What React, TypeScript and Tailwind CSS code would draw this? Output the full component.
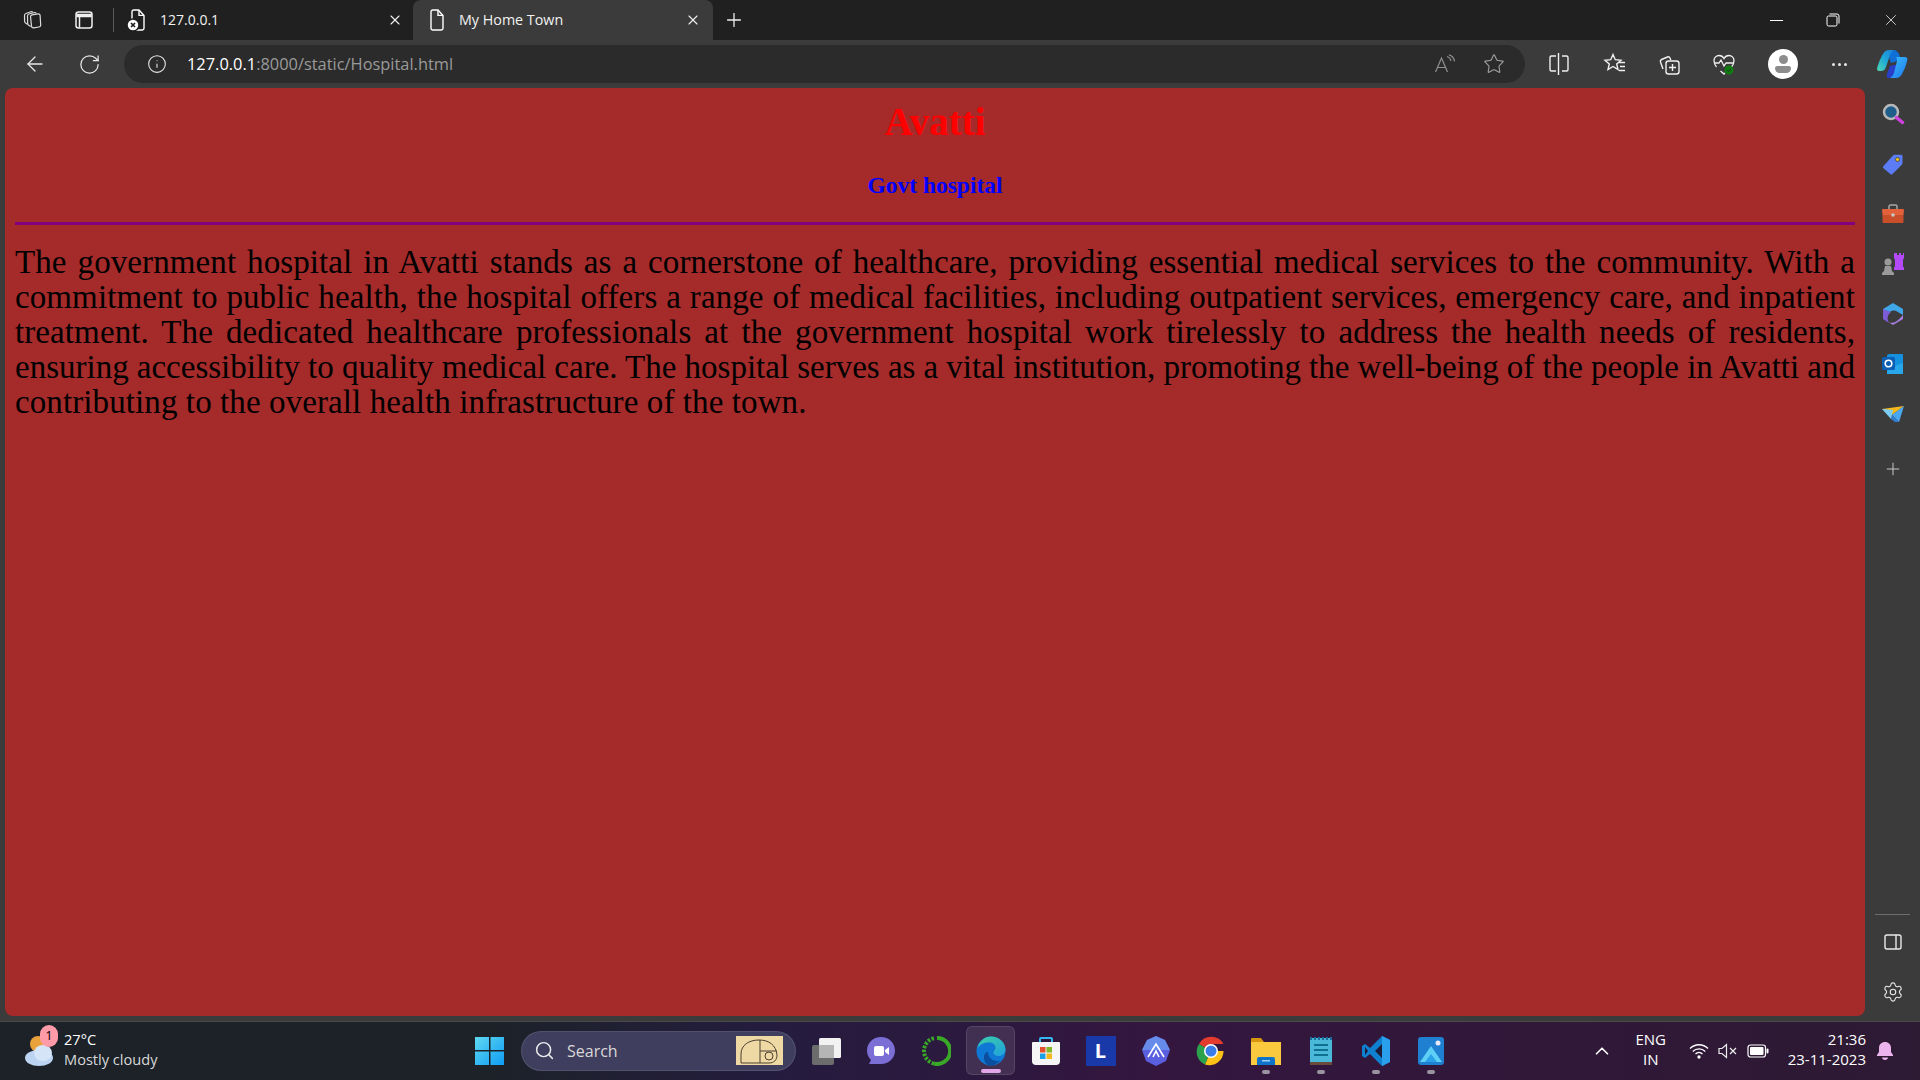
import { ArrowLeft, ChevronUp, Info, Plus, RotateCw, Search, Settings, Star, X } from "lucide-react";
import type { ReactNode } from "react";

const ui = "font-['Open_Sans','Noto_Sans',sans-serif]";

const DocIcon = ({ badge }: { badge?: boolean }) => (
  <svg width="22" height="24" viewBox="0 0 22 24" fill="none" stroke="#fff" strokeWidth="1.400">
    <path d="M6 3.700A1.700 1.700 0 0 1 7.700 2H13l5 5.400v12.900a1.700 1.700 0 0 1-1.700 1.700H7.700A1.700 1.700 0 0 1 6 20.300z" />
    <path d="M13 2v5.400h5" />
    {badge && (
      <>
        <circle cx="7" cy="17" r="6" fill="#fff" stroke="#202020" strokeWidth="1.500" />
        <path d="M5 15l4 4M9 15l-4 4" stroke="#202020" strokeWidth="1.700" />
      </>
    )}
  </svg>
);

const TitleBar = () => (
  <div className="h-10 bg-[#202020] flex items-center shrink-0 relative">
    <div className="w-[22px] ml-[21px] flex justify-center">
      <svg width="22" height="22" viewBox="0 0 22 22" fill="none" stroke="#dcdcdc" strokeWidth="1.200">
        <path d="M9.500 7.500a2 2 0 0 1 1.600-1.700l6-1a1.800 1.800 0 0 1 2 1.700l.6 9.500a2 2 0 0 1-1.700 2l-5.300.8a2 2 0 0 1-2.200-1.700z" />
        <path d="M9.700 17.500l-2-1.300a2 2 0 0 1-1-1.700L6.500 7a2 2 0 0 1 1.500-2l5.500-1.500a2 2 0 0 1 1.800.8" />
        <path d="M6.800 15.500l-2.200-1.500a2 2 0 0 1-1-1.700l-.1-5.800a2 2 0 0 1 1.400-2l5-1.700a2 2 0 0 1 2 .5" />
      </svg>
    </div>
    <div className="ml-[31px] w-5 flex justify-center">
      <svg width="20" height="20" viewBox="0 0 20 20" fill="none" stroke="#f0f0f0" strokeWidth="1.500">
        <rect x="2" y="2" width="16" height="16" rx="2.500" />
        <path d="M2.300 5.500h15.400" strokeWidth="3.500" />
        <path d="M5.500 6.500v11" />
      </svg>
    </div>
    <div className="ml-[19px] w-px h-6 bg-[#5a5a5a]" />
    <div className="flex items-center w-[299px] h-10 pl-[12px] pr-[10px]">
      <DocIcon badge />
      <span className={`${ui} ml-[12px] text-[14px] text-[#f2f2f2] flex-1 -translate-y-px`}>127.0.0.1</span>
      <X size={16} color="#f0f0f0" strokeWidth={1.700} />
    </div>
    <div className="flex items-center w-[300px] h-10 bg-[#3b3b3b] rounded-t-lg pl-[12px] pr-[12px]">
      <DocIcon />
      <span className={`${ui} ml-[12px] text-[14.300px] text-[#f2f2f2] flex-1`}>My Home Town</span>
      <X size={16} color="#f0f0f0" strokeWidth={1.700} />
    </div>
    <Plus size={22} color="#f0f0f0" strokeWidth={1.400} className="ml-[10px]" />
    <div className="ml-auto flex items-center">
      <div className="w-[56px] flex justify-center">
        <div className="w-[13px] h-px bg-white" />
      </div>
      <div className="w-[58px] flex justify-center">
        <svg width="14" height="14" viewBox="0 0 14 14" fill="none" stroke="#fff" strokeWidth="1">
          <rect x="1" y="3" width="10" height="10" rx="1.500" />
          <path d="M3.500 1h7.500a2 2 0 0 1 2 2v7.500" />
        </svg>
      </div>
      <div className="w-[58px] flex justify-center">
        <X size={18} color="#fff" strokeWidth={1} />
      </div>
    </div>
  </div>
);

const ToolIcon = ({ w, children }: { w: number; children: ReactNode }) => (
  <div className="flex justify-center items-center" style={{ width: w }}>
    {children}
  </div>
);

const CopilotLogo = () => (
  <svg width="32" height="30" viewBox="0 0 32 30">
    <defs>
      <linearGradient id="cpa" x1="0" y1="1" x2="1" y2="0">
        <stop offset="0" stopColor="#4fd8b0" />
        <stop offset="0.500" stopColor="#1fa8d8" />
        <stop offset="1" stopColor="#1a7fd8" />
      </linearGradient>
      <linearGradient id="cpb" x1="0" y1="0" x2="1" y2="1">
        <stop offset="0" stopColor="#38c0f8" />
        <stop offset="1" stopColor="#1f78f0" />
      </linearGradient>
    </defs>
    <path d="M17 1c3 0 5 2 6 4l2 6-10 3-2-6c-1-3 1-7 4-7z" fill="#0f6fd6" />
    <path d="M13 29c-2 0-3-2-2-4l3-8 8-2 0 4c-1 5-4 10-9 10z" fill="#2a3fc8" />
    <path d="M1 20C2 15 5 8 7 5c1-2 3-4 6-4h5c-2 1-3 3-4 5l-4 12c-1 3-3 4-5 4H3c-1 0-2-1-2-2z" fill="url(#cpa)" />
    <path d="M20 8h9c2 0 3 2 2 4-1 5-3 9-5 13-1 2-3 4-6 4h-6c2-1 3-3 4-5l3-12c0-2 0-3-1-4z" fill="url(#cpb)" />
  </svg>
);

const Toolbar = () => (
  <div className="h-12 bg-[#3b3b3b] flex items-center shrink-0 pl-[23px]">
    <ToolIcon w={24}>
      <ArrowLeft size={24} color="#e8e8e8" strokeWidth={1.300} />
    </ToolIcon>
    <div className="ml-[31px]">
      <RotateCw size={23} color="#e8e8e8" strokeWidth={1.300} />
    </div>
    <div className="ml-[23px] w-[1401px] h-[38px] bg-[#2b2b2b] rounded-full flex items-center">
      <Info size={20} color="#e8e8e8" strokeWidth={1.300} className="ml-[23px]" />
      <span className={`${ui} ml-5 text-[16.400px]`}>
        <span className="text-white">127.0.0.1</span>
        <span className="text-[#9a9a9a]">:8000/static/Hospital.html</span>
      </span>
      <div className="ml-auto mr-[20px] flex items-center gap-[27px]">
        <svg width="22" height="20" viewBox="0 0 22 20" fill="none" stroke="#8f8f8f" strokeWidth="1.200">
          <path d="M1.500 18L7.500 4l6 14M3.500 13.500h8" />
          <path d="M13 2.500c2 .5 3.500 2 4 4.500M15 0.800c2.800.8 5 3 5.500 6.500" />
        </svg>
        <Star size={22} color="#a0a0a0" strokeWidth={1.200} />
      </div>
    </div>
    <div className="flex items-center ml-[20px]">
      <ToolIcon w={28}>
        <svg width="22" height="24" viewBox="0 0 22 24" fill="none" stroke="#f0f0f0" strokeWidth="1.400">
          <path d="M8 4H3.500A1.500 1.500 0 0 0 2 5.500v12A1.500 1.500 0 0 0 3.500 19H8M14 4h4.500A1.500 1.500 0 0 1 20 5.500v12a1.500 1.500 0 0 1-1.500 1.500H14" />
          <path d="M10.500 1v22" />
        </svg>
      </ToolIcon>
      <div className="ml-[28px]">
        <ToolIcon w={28}>
          <svg width="24" height="24" viewBox="0 0 24 24" fill="none" stroke="#f0f0f0" strokeWidth="1.400">
            <path d="M10 2.500l2.300 5.200 5.700.5-4.300 3.700 1.300 5.600-5-3-5 3 1.300-5.600L2 8.200l5.700-.5z" />
            <path d="M16 10.500h6M17 14.500h5M16 18.500h6" />
          </svg>
        </ToolIcon>
      </div>
      <div className="ml-[26px]">
        <ToolIcon w={28}>
          <svg width="24" height="24" viewBox="0 0 24 24" fill="none" stroke="#f0f0f0" strokeWidth="1.400">
            <path d="M6 17l-2.500-7a2 2 0 0 1 1-2.500l6-2.500a2 2 0 0 1 2.500 1l.8 2" />
            <rect x="9" y="9" width="13" height="13" rx="2.500" />
            <path d="M15.500 12v7M12 15.500h7" />
          </svg>
        </ToolIcon>
      </div>
      <div className="ml-[27px]">
        <ToolIcon w={28}>
          <svg width="24" height="24" viewBox="0 0 24 24" fill="none">
            <path d="M4.500 15C2.500 12.500 2 10.500 2 8.500 2 5.500 4.500 3.500 7 3.500c2 0 4 1 5 3 1-2 3-3 5-3 2.500 0 5 2 5 5 0 2-.5 4-2.500 6.500M8.500 19l3.500 3 1-1" stroke="#f0f0f0" strokeWidth="1.300" />
            <path d="M2 11h5l2-3 3 6 2-3h8" stroke="#f0f0f0" strokeWidth="1.300" />
            <circle cx="17" cy="18" r="4.500" fill="#107c10" />
            <path d="M15 18l1.500 1.500 2.500-2.500" stroke="#2b2b2b" strokeWidth="1" />
          </svg>
        </ToolIcon>
      </div>
      <div className="ml-[30px] w-[30px] h-[30px] rounded-full bg-white flex flex-col items-center justify-center gap-[2px]">
        <div className="w-[9px] h-[9px] rounded-full bg-[#8c8c8c]" />
        <div className="w-[16px] h-[7px] rounded-b-lg rounded-t-sm bg-[#8c8c8c]" />
      </div>
      <div className="ml-[34px] flex gap-[3px]">
        <div className="w-[3px] h-[3px] rounded-full bg-[#e8e8e8]" />
        <div className="w-[3px] h-[3px] rounded-full bg-[#e8e8e8]" />
        <div className="w-[3px] h-[3px] rounded-full bg-[#e8e8e8]" />
      </div>
      <div className="ml-[29px]">
        <CopilotLogo />
      </div>
    </div>
  </div>
);

const Page = () => (
  <main className="flex-1 bg-[#a52a2a] rounded-lg ml-[5px] mb-[5px] px-[10px] pt-[14px] font-['Liberation_Serif',serif]">
    <h1 className="text-center text-[39px] leading-[40px] font-bold text-[#ff0000]">Avatti</h1>
    <h2 className="text-center text-[23.500px] leading-[28px] font-bold text-[#0000ff] mt-[29px]">Govt hospital</h2>
    <hr className="mt-[23px] h-[3px] border-0 bg-[#800080]" />
    <p className="mt-[20px] text-justify text-[33px] leading-[35px] tracking-[0.1px] text-black">
      The government hospital in Avatti stands as a cornerstone of healthcare, providing essential medical services to
      the community. With a commitment to public health, the hospital offers a range of medical facilities, including
      outpatient services, emergency care, and inpatient treatment. The dedicated healthcare professionals at the
      government hospital work tirelessly to address the health needs of residents,{" "}
      <span className="tracking-normal [word-spacing:-2px]">
        ensuring accessibility to quality medical care. The hospital serves as a vital institution, promoting the
        well-being of the people in Avatti and
      </span>{" "}
      contributing to the overall health infrastructure of the town.
    </p>
  </main>
);

const SideSlot = ({ children }: { children: ReactNode }) => (
  <div className="h-[50px] flex items-center justify-center">{children}</div>
);

const Sidebar = () => (
  <aside className="w-[55px] flex flex-col items-center pb-[18px] pt-px">
    <SideSlot>
      <svg width="24" height="24" viewBox="0 0 24 24" fill="none">
        <circle cx="10" cy="10" r="7" fill="#1f5d8a" stroke="#b8b8b8" strokeWidth="2.500" />
        <path d="M15.500 15.500l6 5" stroke="#d040e0" strokeWidth="3.500" strokeLinecap="round" />
      </svg>
    </SideSlot>
    <SideSlot>
      <svg width="22" height="22" viewBox="0 0 22 22">
        <path d="M1.500 13L11 2.500c.5-.5 1-.7 1.500-.7H19c1 0 1.500.7 1.500 1.500v7c0 .5-.2 1-.6 1.400L10.500 21c-.7.7-1.500.7-2.200 0L1.500 15.200c-.7-.7-.7-1.500 0-2.200z" fill="#5b7cf5" />
        <circle cx="15.500" cy="6.500" r="2" fill="#f5c518" stroke="#333" strokeWidth="0.700" />
      </svg>
    </SideSlot>
    <SideSlot>
      <svg width="24" height="22" viewBox="0 0 24 22">
        <path d="M8 6V3.500C8 2.700 8.700 2 9.500 2h5c.8 0 1.500.7 1.500 1.500V6" fill="none" stroke="#a8a8a8" strokeWidth="1.500" />
        <path d="M1 7a1 1 0 0 1 1-1h20a1 1 0 0 1 1 1l-.5 5h-21z" fill="#e2603a" />
        <path d="M1.500 12h21v7a1 1 0 0 1-1 1h-19a1 1 0 0 1-1-1z" fill="#c94f2b" />
        <circle cx="12" cy="12" r="1.800" fill="#c8c8c8" />
      </svg>
    </SideSlot>
    <SideSlot>
      <svg width="24" height="24" viewBox="0 0 24 24">
        <path d="M14 1h2v2h2V1h2v2h2V1h1v5l-1 2v7h1v3H13v-3h1V8l-1-2V1z" fill="#b44af5" />
        <circle cx="7" cy="10" r="3.500" fill="#9a9a9a" />
        <path d="M4 14h6l1 5 2 2v2H1v-2l2-2z" fill="#9a9a9a" />
      </svg>
    </SideSlot>
    <SideSlot>
      <svg width="22" height="24" viewBox="0 0 22 24">
        <path d="M11 1l10 6v6L15 9.500C13 8 9.500 8.500 8 10L1 15V7z" fill="#3fa6e8" />
        <path d="M1 7v10l6 4c-1-2-2-5-1-7 .5-2 2-3 3-4z" fill="#7b5cd6" />
        <path d="M21 13v4l-10 6-4-2.500c2 .5 5 .5 7-1 2-1 4-3.500 7-6.500z" fill="#a87de0" />
      </svg>
    </SideSlot>
    <SideSlot>
      <svg width="22" height="22" viewBox="0 0 22 22">
        <path d="M7 1h13a1 1 0 0 1 1 1v18a1 1 0 0 1-1 1H5V3a2 2 0 0 1 2-2z" fill="#1490df" />
        <path d="M21 10v10a1 1 0 0 1-1 1H5v-3l8-5z" fill="#28a8ea" />
        <rect x="0" y="4" width="13" height="13" rx="1.500" fill="#0a5fb4" />
        <circle cx="6.500" cy="10.500" r="3.300" fill="none" stroke="#fff" strokeWidth="1.600" />
      </svg>
    </SideSlot>
    <SideSlot>
      <svg width="24" height="18" viewBox="0 0 24 18">
        <path d="M1 4l22-3-12 9z" fill="#f5b81c" />
        <path d="M23 1L18 17l-7-7z" fill="#4aa8f0" />
        <path d="M11 10l7 7-4 0-4-3z" fill="#2f7fd4" />
        <path d="M1 4l11 1-2 9z" fill="#7ccdf5" />
      </svg>
    </SideSlot>
    <Plus size={20} color="#c8c8c8" strokeWidth={1.200} className="mt-[20px]" />
    <div className="mt-auto w-[35px] h-px bg-[#6e6e6e]" />
    <svg width="20" height="18" viewBox="0 0 20 18" fill="none" stroke="#eaeaea" strokeWidth="1.400" className="mt-[18px]">
      <rect x="2" y="2" width="16" height="14" rx="2" />
      <path d="M13 2v14" />
    </svg>
    <Settings size={22} color="#eaeaea" strokeWidth={1.200} className="mt-[30px]" />
  </aside>
);

const TaskIcon = ({ active, dot, children }: { active?: boolean; dot?: boolean; children: ReactNode }) => (
  <div
    className={`w-[49px] h-[49px] mx-[3px] rounded-md flex items-center justify-center relative ${
      active ? "bg-white/10 border border-white/10" : ""
    }`}
  >
    {children}
    {active && <div className="absolute bottom-[1px] w-[20px] h-[4px] rounded-full bg-[#e3a6e8]" />}
    {dot && <div className="absolute bottom-[1px] w-[8px] h-[4px] rounded-full bg-[#9a93a0]" />}
  </div>
);

const Taskbar = () => (
  <div className="h-[59px] shrink-0 flex items-center pb-px border-t border-[#4a4a4a] bg-[linear-gradient(90deg,#1c2228_0%,#1c2228_25%,#241c3e_40%,#34163f_60%,#2d1a33_100%)]">
    <div className="w-[475px] flex items-center pl-[25px] relative">
      <svg width="34" height="36" viewBox="0 0 34 36">
        <circle cx="13" cy="11" r="8" fill="#e9a23b" />
        <ellipse cx="14" cy="25" rx="14" ry="8" fill="#bcd4f2" />
        <ellipse cx="18" cy="20" rx="9" ry="8" fill="#d5e4f7" />
      </svg>
      <div className="absolute left-[40px] top-[-6px] w-[18px] h-[22px] rounded-full bg-[#ff9aa8] flex items-center justify-center text-[13px] text-black font-['Open_Sans',sans-serif]">
        1
      </div>
      <div className={`${ui} ml-[5px] text-[14.600px] leading-[20px] -translate-y-0.5`}>
        <div className="text-white">27°C</div>
        <div className="text-[#d8d8d8]">Mostly cloudy</div>
      </div>
    </div>
    <svg width="30" height="30" viewBox="0 0 30 30">
      <defs>
        <linearGradient id="win" x1="0" y1="0" x2="1" y2="1">
          <stop offset="0" stopColor="#5fd8f0" />
          <stop offset="1" stopColor="#0f9cf5" />
        </linearGradient>
      </defs>
      <path d="M0 1h14v13H0zM15.500 1H29v13H15.500zM0 15.500h14V29H0zM15.500 15.500H29V29H15.500z" fill="url(#win)" />
    </svg>
    <div className="ml-[16px] w-[275px] h-10 rounded-full bg-[#3f3e5e] border border-white/10 flex items-center pl-[12px] pr-[12px]">
      <Search size={21} color="#ececec" strokeWidth={1.700} />
      <span className={`${ui} ml-[12px] text-[16px] text-[#d8d8d8] flex-1`}>Search</span>
      <svg width="47" height="29" viewBox="0 0 47 29" fill="none">
        <rect width="47" height="29" fill="#eed9a4" />
        <path d="M5 27V18C5 9 13 4 23 4s17 5 18 15c0 5-3 8-8 8H5zM24 4v23M24 15h17" stroke="#4b4030" strokeWidth="1" />
        <circle cx="33" cy="20" r="4" stroke="#4b4030" strokeWidth="1" />
      </svg>
    </div>
    <div className="flex items-center ml-[2px]">
      <TaskIcon>
        <svg width="30" height="30" viewBox="0 0 30 30">
          <rect x="1" y="9" width="22" height="20" rx="2" fill="#6c6c6c" />
          <rect x="8" y="2" width="22" height="20" rx="1.500" fill="#f2f2f2" />
          <rect x="8" y="9" width="15" height="13" fill="#b5b5b5" />
        </svg>
      </TaskIcon>
      <TaskIcon>
        <svg width="30" height="30" viewBox="0 0 30 30">
          <path d="M15 1c8 0 14 6 14 13.500S23 28 15 28H3l2-4C2.500 21.500 1 18.500 1 14.500 1 7 7 1 15 1z" fill="#7b6fd6" />
          <rect x="8" y="10" width="10" height="10" rx="2" fill="#fff" />
          <path d="M19 14l4-3v8l-4-3z" fill="#fff" />
        </svg>
      </TaskIcon>
      <TaskIcon>
        <svg width="30" height="30" viewBox="0 0 30 30" fill="none">
          <path d="M16 2a13 13 0 1 1-3 25.600" stroke="#3aa827" strokeWidth="4" />
          <path d="M13 27.500A13 13 0 0 1 14 2" stroke="#3aa827" strokeWidth="4" strokeDasharray="2.500 1.500" />
        </svg>
      </TaskIcon>
      <TaskIcon active>
        <svg width="30" height="30" viewBox="0 0 30 30">
          <defs>
            <linearGradient id="edg" x1="0" y1="0" x2="1" y2="1">
              <stop offset="0" stopColor="#3fd0a0" />
              <stop offset="1" stopColor="#1fa0e0" />
            </linearGradient>
          </defs>
          <circle cx="15" cy="15" r="14.500" fill="#0f78d4" />
          <path d="M1 13C3 5 9 .5 15 .5c8 0 14.500 6 14.500 13 0 4-3 6.500-7 6.500-3 0-5-1.500-5-3 0-3 2-2.500 2-5.500 0-3-3-5-6.500-5C7 6.500 3 9 1 13z" fill="url(#edg)" />
          <path d="M12 16c0 5 4 9 9 9 1 0 2 0 3-.5-3 3.500-7 5.500-11 5-3-1-5-4-5-8 0-3 2-6 4-5.500z" fill="#0b4d9e" />
        </svg>
      </TaskIcon>
      <TaskIcon>
        <svg width="30" height="30" viewBox="0 0 30 30" fill="none">
          <path d="M9 6V3a1 1 0 0 1 1-1h10a1 1 0 0 1 1 1v3" stroke="#35b8f0" strokeWidth="2" />
          <path d="M1 7a1 1 0 0 1 1-1h26a1 1 0 0 1 1 1v18a4 4 0 0 1-4 4H5a4 4 0 0 1-4-4z" fill="#f5f5f5" />
          <rect x="9" y="11" width="5.500" height="5.500" fill="#e5502d" />
          <rect x="15.500" y="11" width="5.500" height="5.500" fill="#80b82a" />
          <rect x="9" y="17.500" width="5.500" height="5.500" fill="#1ca0e8" />
          <rect x="15.500" y="17.500" width="5.500" height="5.500" fill="#f5b81c" />
        </svg>
      </TaskIcon>
      <TaskIcon>
        <div className={`${ui} w-[30px] h-[30px] bg-[#1a39a8] flex items-center justify-center text-white font-bold text-[20px]`}>
          L
        </div>
      </TaskIcon>
      <TaskIcon>
        <svg width="28" height="30" viewBox="0 0 28 30" fill="none">
          <path d="M14 0l9 4 5 10-4 11-10 5-10-5L0 14 5 4z" fill="#5a5fe0" />
          <path d="M14 0l9 4 5 10H0L5 4z" fill="#6ea8f0" opacity="0.600" />
          <path d="M6 21L14 8l8 13M11 21l3-6 3 6" stroke="#fff" strokeWidth="1.600" />
        </svg>
      </TaskIcon>
      <TaskIcon>
        <svg width="30" height="30" viewBox="0 0 30 30">
          <path d="M15 15L3 8a14 14 0 0 1 24.500 0H15z" fill="#e33b2e" />
          <path d="M15 15l-6 13.500A14 14 0 0 1 3 8z" fill="#2ba24c" />
          <path d="M15 15h12.500A14 14 0 0 1 9 28.500z" fill="#fbc117" />
          <circle cx="15" cy="15" r="7" fill="#fff" />
          <circle cx="15" cy="15" r="5.500" fill="#3b7de8" />
        </svg>
      </TaskIcon>
      <TaskIcon dot>
        <svg width="30" height="30" viewBox="0 0 30 30">
          <path d="M0 3a1 1 0 0 1 1-1h9l3 4H0z" fill="#d8960f" />
          <rect y="6" width="30" height="23" fill="#fbc93d" />
          <path d="M6 29v-6a2 2 0 0 1 2-2h14a2 2 0 0 1 2 2v6z" fill="#0f74c8" />
          <rect x="11" y="24" width="8" height="1.500" fill="#9fd0f5" />
        </svg>
      </TaskIcon>
      <TaskIcon dot>
        <svg width="24" height="30" viewBox="0 0 24 30">
          <rect x="1" y="2" width="22" height="26" fill="#4ab8d8" />
          <rect x="1" y="26" width="22" height="3" fill="#6a4a3a" />
          <path d="M2 1v3M6 1v3M10 1v3M14 1v3M18 1v3M22 1v3" stroke="#1a6a9a" strokeWidth="2" />
          <path d="M5 9h14M5 14h14M5 19h14" stroke="#10708f" strokeWidth="2" />
        </svg>
      </TaskIcon>
      <TaskIcon dot>
        <svg width="30" height="30" viewBox="0 0 30 30">
          <path d="M21 0l8 4v22l-8 4-12-12-5 4-3-2v-10l3-2 5 4z" fill="#0f7fd0" />
          <path d="M21 0l8 4v22l-8 4z" fill="#2aa0ec" />
          <path d="M21 8l-7 7 7 7z" fill="#1c1c3a" />
          <path d="M4 11l3 4-3 4z" fill="#1c1c3a" />
        </svg>
      </TaskIcon>
      <TaskIcon dot>
        <svg width="26" height="28" viewBox="0 0 26 28">
          <rect width="26" height="28" rx="3" fill="#1f7fd0" />
          <circle cx="20" cy="6" r="2.500" fill="#e8e8f8" />
          <path d="M2 25L13 9l11 16z" fill="#5fd0f5" />
          <path d="M7 25l6-8 6 8z" fill="#2aa0e8" />
        </svg>
      </TaskIcon>
    </div>
    <div className="ml-auto flex items-center pr-[26px]">
      <ChevronUp size={22} color="#fff" strokeWidth={1.800} />
      <div className={`${ui} ml-[19px] w-[38px] text-center text-[15px] leading-[20px] text-white -translate-y-0.5`}>
        ENG
        <br />
        IN
      </div>
      <div className="ml-[19px] flex items-center gap-[9px]">
        <svg width="20" height="16" viewBox="0 0 20 16" fill="none" stroke="#fff" strokeWidth="1.300">
          <path d="M1 5.500c5-5 13-5 18 0M3.800 8.500c3.500-3.500 9-3.500 12.500 0M6.500 11c2-2 5-2 7 0" />
          <circle cx="10" cy="14" r="1" fill="#fff" />
        </svg>
        <svg width="20" height="16" viewBox="0 0 20 16" fill="none" stroke="#eee" strokeWidth="1.200">
          <path d="M1 5.500h3L8.500 1.500v13L4 10.500H1z" />
          <path d="M12 5l6 6M18 5l-6 6" />
        </svg>
        <svg width="22" height="14" viewBox="0 0 22 14">
          <rect x="1" y="1" width="17.500" height="12" rx="2.500" fill="none" stroke="#fff" strokeWidth="1.200" />
          <rect x="3" y="3" width="13.500" height="8" rx="1" fill="#fff" />
          <rect x="19.500" y="4.500" width="2" height="5" rx="1" fill="#fff" />
        </svg>
      </div>
      <div className={`${ui} ml-[19px] text-right text-[15px] leading-[20px] text-white -translate-y-0.5`}>
        <div>21:36</div>
        <div>23-11-2023</div>
      </div>
      <svg width="18" height="20" viewBox="0 0 18 20" className="ml-[10px]">
        <path d="M9 1c3.500 0 6 2.500 6 6v4l2 3c.3.600 0 1-.5 1h-15c-.5 0-.8-.4-.5-1l2-3V7c0-3.500 2.500-6 6-6z" fill="#ecb4ec" />
        <path d="M6 16.500h6c0 1.500-1.500 2.500-3 2.500s-3-1-3-2.500z" fill="#ecb4ec" />
      </svg>
    </div>
  </div>
);

export default function App() {
  return (
    <div className="w-[1920px] h-[1080px] overflow-hidden flex flex-col bg-[#3b3b3b]">
      <TitleBar />
      <Toolbar />
      <div className="flex flex-1">
        <div className="flex-1 flex">
          <Page />
        </div>
        <Sidebar />
      </div>
      <Taskbar />
    </div>
  );
}
